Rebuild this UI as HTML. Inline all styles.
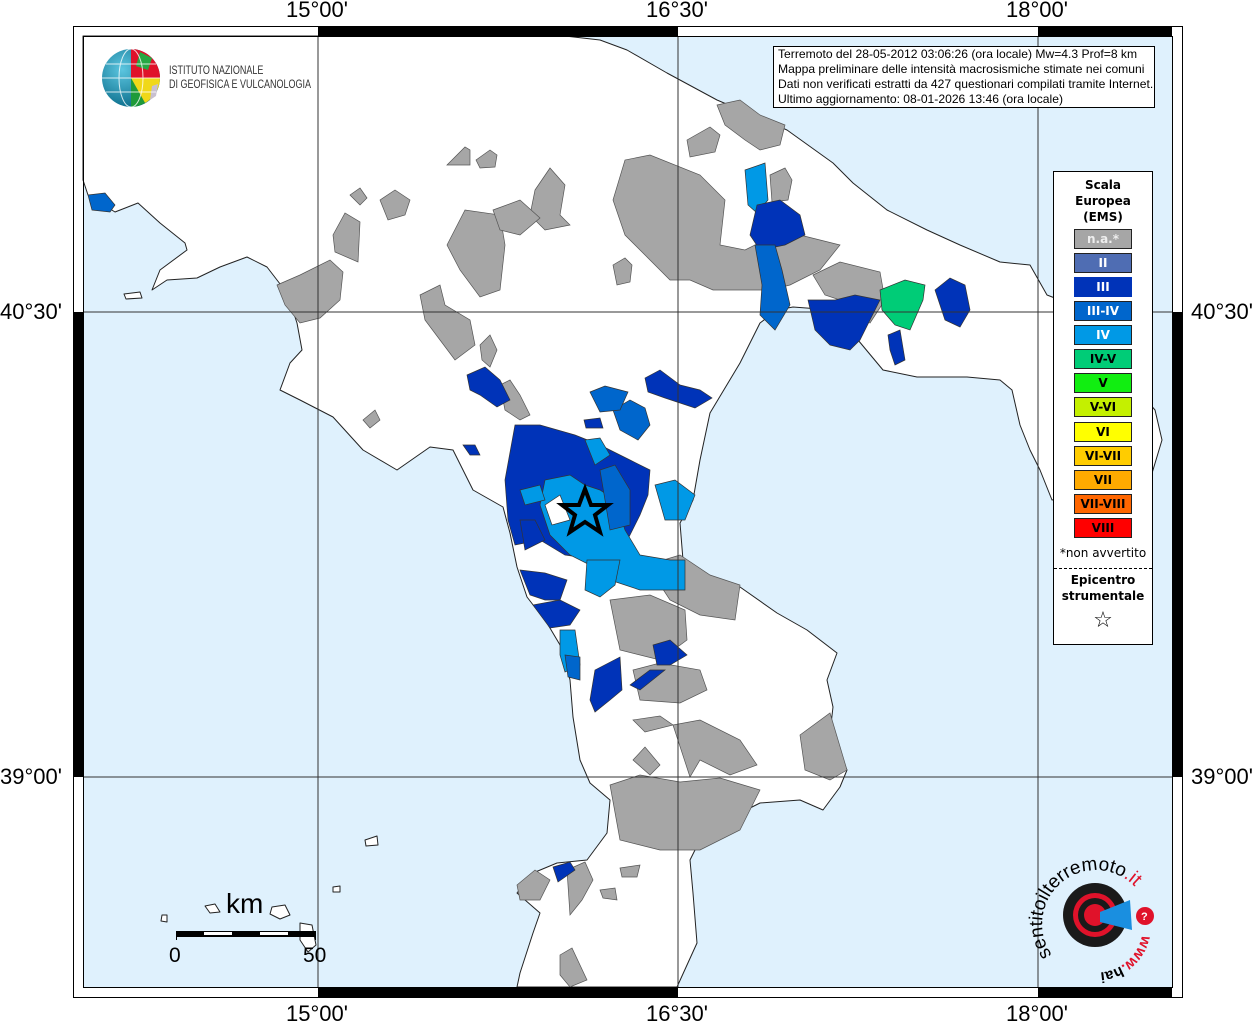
<!DOCTYPE html>
<html><head><meta charset="utf-8"><style>
html,body{margin:0;padding:0;background:#fff;}
body{width:1255px;height:1024px;position:relative;overflow:hidden;font-family:"Liberation Sans",sans-serif;}
.lbl{position:absolute;font-size:22px;color:#000;}
#info{position:absolute;left:773px;top:46px;width:382px;height:62px;border:1px solid #000;background:#fff;font-size:12px;line-height:15px;padding:0 0 0 4px;box-sizing:border-box;white-space:nowrap;overflow:hidden;}
#info span{display:inline-block;transform:scaleX(1.01);transform-origin:left;}
#leg{position:absolute;left:1053px;top:171px;width:100px;height:474px;border:1px solid #000;background:#fff;box-sizing:border-box;font-family:"DejaVu Sans",sans-serif;text-align:center;}
#leg .t{font-weight:bold;font-size:12px;line-height:16px;margin-top:5px;}
.sw{position:absolute;left:20px;width:56px;height:18px;border:1px solid #222;font-weight:bold;font-size:12px;line-height:18px;text-align:center;}
</style></head><body>
<svg width="1255" height="1024" style="position:absolute;left:0;top:0">
<rect x="83" y="36" width="1089" height="951" fill="#dff1fd"/>
<g stroke="#222" stroke-width="1" stroke-linejoin="round">
<polygon fill="#fff" points="83,36 565,36 600,40 627,50 667,73 717,100 757,117 787,130 833,163 853,183 887,210 927,230 960,245 1000,262 1030,265 1047,295 1060,300 1155,410 1162,440 1150,480 1052,500 1040,470 1030,450 1020,425 1012,390 1000,380 967,377 917,377 883,370 833,310 793,307 777,310 760,323 740,363 710,413 700,460 693,500 680,523 683,560 713,583 740,587 777,613 807,630 837,653 827,680 833,707 830,733 847,770 840,787 823,810 800,800 760,803 720,823 700,840 690,860 693,893 697,943 677,987 517,987 520,973 533,933 540,913 517,893 533,873 557,863 587,860 607,833 610,800 590,783 580,760 573,717 570,680 563,650 547,623 527,597 517,567 510,533 503,507 473,490 453,450 430,447 397,470 363,450 333,417 300,400 280,390 290,363 302,350 297,323 287,293 267,267 247,257 220,267 197,278 167,280 152,290 160,270 187,250 185,243 160,223 138,203 115,212 88,195 83,180"/>
<polygon fill="#fff" points="124,294 140,292 142,298 126,299"/>
<polygon fill="#fff" points="205,906 215,904 220,912 210,913"/>
<polygon fill="#fff" points="272,907 285,905 290,915 280,919 270,914"/>
<polygon fill="#fff" points="300,923 312,925 316,945 308,952 300,940"/>
<polygon fill="#fff" points="162,915 167,915 167,922 161,921"/>
<polygon fill="#fff" points="365,840 377,836 378,845 366,846"/>
<polygon fill="#fff" points="333,887 340,886 340,892 333,892"/>
</g>
<g fill="#a6a6a6" stroke="#555" stroke-width="0.7">
<polygon points="476,160 490,150 497,155 495,167 480,168"/>
<polygon points="535,190 550,168 565,185 560,215 570,225 545,230 530,215"/>
<polygon points="447,245 465,210 500,215 505,245 500,290 480,297 460,270"/>
<polygon points="493,210 520,200 540,218 520,235 500,230"/>
<polygon points="613,200 625,160 650,155 700,175 725,200 720,245 745,250 765,240 780,230 800,235 820,240 840,245 820,270 790,285 770,290 740,290 713,290 690,280 670,280 645,255 625,235"/>
<polygon points="717,105 740,100 760,115 785,125 780,145 760,150 745,140 725,125"/>
<polygon points="687,140 710,127 720,135 715,152 690,157"/>
<polygon points="770,175 785,168 792,180 788,200 772,202"/>
<polygon points="613,265 625,258 632,265 630,282 617,285"/>
<polygon points="813,275 840,262 880,272 885,300 870,323 855,305 825,295"/>
<polygon points="277,285 300,275 330,260 343,272 340,300 320,318 300,323 285,305"/>
<polygon points="333,235 345,213 360,222 358,262 335,252"/>
<polygon points="380,200 395,190 410,200 405,215 388,220"/>
<polygon points="350,195 360,188 367,198 360,205"/>
<polygon points="447,165 465,147 470,150 470,165"/>
<polygon points="420,295 440,285 445,305 470,320 475,345 455,360 440,340 425,320"/>
<polygon points="480,345 490,335 497,350 490,367 482,360"/>
<polygon points="500,385 510,380 520,395 530,415 520,420 505,410"/>
<polygon points="363,420 375,410 380,420 370,428"/>
<polygon points="610,600 650,595 685,610 687,640 660,660 620,650"/>
<polygon points="647,565 680,555 710,575 740,585 735,620 700,615 670,600"/>
<polygon points="633,670 660,663 700,670 707,690 680,703 640,700"/>
<polygon points="633,720 660,716 673,725 645,732"/>
<polygon points="673,725 700,720 740,740 757,765 730,775 700,760 690,777"/>
<polygon points="800,735 830,713 847,770 830,780 805,770"/>
<polygon points="633,760 645,747 660,765 650,775"/>
<polygon points="610,785 640,775 680,782 720,778 760,790 740,830 700,850 660,850 620,840"/>
<polygon points="567,870 585,862 593,880 582,900 570,915"/>
<polygon points="517,885 535,870 550,880 540,900 520,900"/>
<polygon points="560,955 572,948 587,980 570,987 560,975"/>
<polygon points="620,868 640,865 637,877 622,877"/>
<polygon points="600,890 615,888 617,900 603,898"/>
</g>
<g stroke="#333" stroke-width="0.7">
<polygon fill="#0066cc" points="88,195 105,193 115,205 110,212 92,210"/>
<polygon fill="#0099e6" points="745,170 765,163 768,200 757,213 748,205"/>
<polygon fill="#0033b8" points="757,205 780,200 800,215 805,235 785,245 760,250 750,235"/>
<polygon fill="#0066cc" points="755,245 775,245 782,270 790,305 775,330 760,315 762,285"/>
<polygon fill="#0033b8" points="808,300 835,300 855,295 880,300 870,320 860,340 850,350 830,345 815,330"/>
<polygon fill="#0033b8" points="888,335 900,330 905,360 895,365 890,350"/>
<polygon fill="#00cc77" points="880,290 905,280 925,285 923,300 910,330 895,325 882,310"/>
<polygon fill="#0033b8" points="935,290 950,278 965,285 970,310 960,327 945,320"/>
<polygon fill="#0033b8" points="645,378 660,370 680,385 700,390 712,398 695,408 665,398 648,392"/>
<polygon fill="#0066cc" points="613,410 630,400 645,408 650,425 638,440 620,430"/>
<polygon fill="#0066cc" points="590,392 605,386 628,392 620,410 600,412"/>
<polygon fill="#0033b8" points="467,375 485,367 500,380 510,400 497,407 480,395 470,390"/>
<polygon fill="#0033b8" points="584,420 600,418 603,428 586,428"/>
<polygon fill="#0033b8" points="463,445 475,445 480,455 470,455"/>
<polygon fill="#0033b8" points="505,480 515,425 540,425 575,435 600,445 630,460 650,470 648,495 640,515 625,545 600,560 565,555 540,540 515,545 508,520"/>
<polygon fill="#0099e6" points="545,480 570,475 585,485 600,490 615,500 625,530 640,555 670,560 685,560 685,590 640,590 610,580 590,565 570,555 550,535 540,505"/>
<polygon fill="#0066cc" points="600,470 615,465 630,490 630,525 610,530"/>
<polygon fill="#0099e6" points="585,440 600,438 610,455 595,465"/>
<polygon fill="#0099e6" points="520,490 540,485 545,500 525,505"/>
<polygon fill="#0099e6" points="655,485 675,480 695,495 685,520 665,520"/>
<polygon fill="#fff" points="545,505 560,495 570,520 552,525"/>
<polygon fill="#0033b8" points="520,520 535,520 545,540 525,550"/>
<polygon fill="#0033b8" points="520,570 545,573 567,580 560,600 545,600 530,595"/>
<polygon fill="#0099e6" points="587,560 620,560 615,585 600,597 585,590"/>
<polygon fill="#0033b8" points="533,605 560,600 580,610 570,625 550,628"/>
<polygon fill="#0099e6" points="560,630 575,630 580,665 565,672 560,655"/>
<polygon fill="#0066cc" points="565,655 580,657 580,680 568,677"/>
<polygon fill="#0033b8" points="653,645 670,640 687,655 670,665 657,665"/>
<polygon fill="#0033b8" points="595,670 620,657 622,690 610,700 595,712 590,700"/>
<polygon fill="#0033b8" points="630,685 650,670 665,670 640,690"/>
<polygon fill="#0033b8" points="553,867 570,862 575,870 558,882"/>
</g>
<g stroke="#333" stroke-width="1" fill="none">
<line x1="318" y1="36" x2="318" y2="987"/><line x1="678" y1="36" x2="678" y2="987"/><line x1="1038" y1="36" x2="1038" y2="987"/>
<line x1="83" y1="312" x2="1172" y2="312"/><line x1="83" y1="777" x2="1172" y2="777"/>
</g>
<polygon points="585,489 591,505 608,505 595,515 600,532 585,522 570,532 575,515 562,505 579,505" fill="#0099e6" stroke="#000" stroke-width="4" stroke-linejoin="miter"/>
<g stroke="#000" stroke-width="1" fill="none">
<rect x="73.5" y="26.5" width="1109" height="971"/>
<rect x="83.5" y="36.5" width="1089" height="951"/>
</g>
<g fill="#000">
<rect x="318" y="26" width="360" height="10"/><rect x="1038" y="26" width="134" height="10"/>
<rect x="318" y="987" width="360" height="10"/><rect x="1038" y="987" width="134" height="10"/>
<rect x="73" y="312" width="10" height="465"/><rect x="1172" y="312" width="10" height="465"/>
</g>
<g>
<rect x="176" y="931" width="140" height="6" fill="#000"/>
<rect x="204" y="932" width="28" height="3" fill="#fff"/><rect x="260" y="932" width="28" height="3" fill="#fff"/>
<line x1="176.5" y1="931" x2="176.5" y2="940" stroke="#000"/><line x1="315.5" y1="931" x2="315.5" y2="940" stroke="#000"/>
</g>
<defs><radialGradient id="g1" cx="0.35" cy="0.35" r="0.7"><stop offset="0" stop-color="#5cc6e0"/><stop offset="1" stop-color="#0a6c8a"/></radialGradient></defs>
<circle cx="131" cy="78" r="29" fill="url(#g1)"/>
<path d="M131,49 A29,29 0 0,1 160,78 L131,78 Z" fill="#e0122a"/>
<path d="M131,78 L160,78 A29,29 0 0,1 145,103 Z" fill="#f0d818"/>
<path d="M131,78 L145,103 A29,29 0 0,1 131,107 Z" fill="#1f9a3a"/>
<path d="M140,52 L152,58 L148,70 L136,66Z" fill="#27a844"/>
<path d="M152,86 L158,84 L156,96 L150,100Z" fill="#c8c0d0"/>
<g stroke="#fff" stroke-width="1" fill="none" opacity="0.8"><ellipse cx="131" cy="78" rx="12" ry="29"/><path d="M102,78 H160 M106,64 H156 M106,92 H156"/></g>
<circle cx="1095" cy="915" r="32" fill="#1a1a1a"/>
<circle cx="1095" cy="915" r="22" fill="#e0122a"/>
<circle cx="1095" cy="915" r="17" fill="#1a1a1a"/>
<circle cx="1095" cy="915" r="11" fill="#e0122a"/>
<polygon points="1100,912 1130,900 1132,930 1100,922" fill="#1a8fe0"/>
<circle cx="1145" cy="916" r="9" fill="#e0122a"/>
<text x="1141" y="920" fill="#fff" font-size="11" font-weight="bold" font-family="Liberation Sans">?</text>
<path id="arc" d="M1052,955 A45,45 0 1,1 1140,893" fill="none"/>
<text font-family="Liberation Sans" font-size="19"><textPath href="#arc">sentito<tspan>il</tspan>terremoto<tspan fill="#e0122a">.it</tspan></textPath></text>
<path id="arc2" d="M1142,935 A46,46 0 0,1 1090,972" fill="none"/>
<text font-family="Liberation Sans" font-size="15" font-weight="bold"><textPath href="#arc2"><tspan fill="#e0122a">www.</tspan>hai</textPath></text>
</svg>
<div style="position:absolute;left:169px;top:63px;font-size:12px;line-height:14px;color:#333;font-family:'Liberation Sans Narrow','Liberation Sans',sans-serif;transform:scaleX(0.75);transform-origin:left;white-space:nowrap;">ISTITUTO NAZIONALE<br>DI GEOFISICA E VULCANOLOGIA</div>
<div class="lbl" style="left:286px;top:-3px">15°00'</div>
<div class="lbl" style="left:646px;top:-3px">16°30'</div>
<div class="lbl" style="left:1006px;top:-3px">18°00'</div>
<div class="lbl" style="left:286px;top:1001px">15°00'</div>
<div class="lbl" style="left:646px;top:1001px">16°30'</div>
<div class="lbl" style="left:1006px;top:1001px">18°00'</div>
<div class="lbl" style="left:0px;top:299px">40°30'</div>
<div class="lbl" style="left:0px;top:764px">39°00'</div>
<div class="lbl" style="left:1191px;top:299px">40°30'</div>
<div class="lbl" style="left:1191px;top:764px">39°00'</div>
<div style="position:absolute;left:226px;top:888px;font-size:28px;">km</div>
<div style="position:absolute;left:169px;top:944px;font-size:21px;">0</div>
<div style="position:absolute;left:303px;top:944px;font-size:21px;">50</div>
<div id="info"><span>Terremoto del 28-05-2012 03:06:26 (ora locale) Mw=4.3 Prof=8 km<br>Mappa preliminare delle intensità macrosismiche stimate nei comuni<br>Dati non verificati estratti da 427 questionari compilati tramite Internet.<br>Ultimo aggiornamento: 08-01-2026 13:46 (ora locale)</span></div>
<div id="leg">
<div class="t">Scala<br>Europea<br>(EMS)</div>
<div class="sw" style="top:57px;background:#a6a6a6;color:#eee">n.a.*</div>
<div class="sw" style="top:81px;background:#4f6db3;color:#fff">II</div>
<div class="sw" style="top:105px;background:#0033b8;color:#fff;border-color:#0033b8">III</div>
<div class="sw" style="top:129px;background:#0066cc;color:#fff">III-IV</div>
<div class="sw" style="top:153px;background:#0099e6;color:#fff">IV</div>
<div class="sw" style="top:177px;background:#00cc77">IV-V</div>
<div class="sw" style="top:201px;background:#11ee11">V</div>
<div class="sw" style="top:225px;background:#c4f000">V-VI</div>
<div class="sw" style="top:250px;background:#ffff00">VI</div>
<div class="sw" style="top:274px;background:#ffcc00">VI-VII</div>
<div class="sw" style="top:298px;background:#ffaa00">VII</div>
<div class="sw" style="top:322px;background:#ff6600">VII-VIII</div>
<div class="sw" style="top:346px;background:#ff0000">VIII</div>
<div style="position:absolute;top:374px;left:0;width:98px;font-size:12px">*non avvertito</div>
<div style="position:absolute;top:396px;left:0;width:98px;border-top:1px dashed #000"></div>
<div style="position:absolute;top:400px;left:0;width:98px;font-size:12px;font-weight:bold;line-height:16px">Epicentro<br>strumentale</div>
<div style="position:absolute;top:436px;left:0;width:98px;font-size:22px">☆</div>
</div>
</body></html>
